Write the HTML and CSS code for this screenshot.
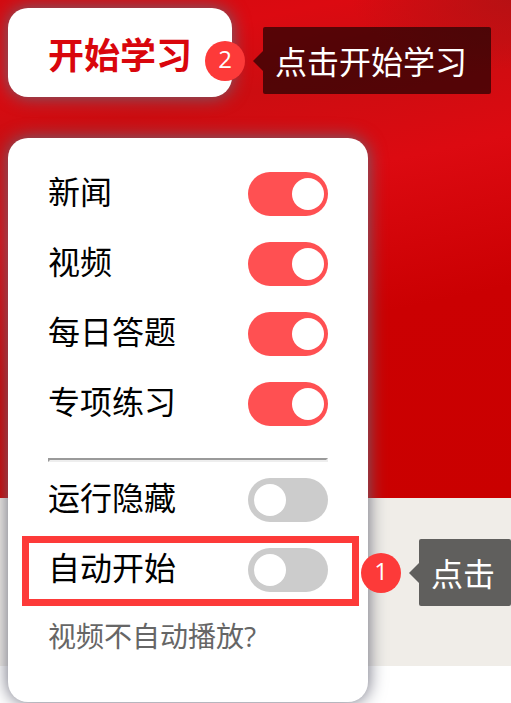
FILE: index.html
```
<!DOCTYPE html>
<html lang="zh-CN">
<head>
<meta charset="utf-8">
<meta name="viewport" content="width=device-width, initial-scale=1">
<title>开始学习</title>
<link rel="stylesheet" href="styles.css">
</head>
<body>
<main class="page">
  <div class="start">
    <button class="card start-button" type="button">开始学习</button>
    <div class="hint hint-start">
      <span class="badge">2</span>
      <span class="callout callout-wide">点击开始学习</span>
    </div>
  </div>
  <form class="card panel">
    <div class="options">
      <div class="row"><label for="news">新闻</label><input class="switch" type="checkbox" id="news" checked></div>
      <div class="row"><label for="video">视频</label><input class="switch" type="checkbox" id="video" checked></div>
      <div class="row"><label for="daily">每日答题</label><input class="switch" type="checkbox" id="daily" checked></div>
      <div class="row"><label for="special">专项练习</label><input class="switch" type="checkbox" id="special" checked></div>
    </div>
    <hr class="divider">
    <div class="options">
      <div class="row"><label for="hidden-run">运行隐藏</label><input class="switch" type="checkbox" id="hidden-run"></div>
      <div class="row row-marked">
        <label for="auto-start">自动开始</label><input class="switch" type="checkbox" id="auto-start">
        <div class="hint hint-auto">
          <span class="badge">1</span>
          <span class="callout">点击</span>
        </div>
      </div>
    </div>
    <a class="help" href="#">视频不自动播放?</a>
  </form>
</main>
</body>
</html>
```
FILE: styles.css
```
* {
  box-sizing: border-box;
}

body {
  margin: 0;
  overflow-x: hidden;
  color: #000;
  font-family: "Open Sans", "Noto Sans CJK SC", sans-serif;
  font-size: 32px;
  line-height: 44px;
  background:
    radial-gradient(ellipse 160px 70px at 100% 0, rgba(176, 18, 20, 0.8), rgba(176, 18, 20, 0)) 0 0 / 100% 498px no-repeat,
    linear-gradient(168deg, #d40a10 0%, #dc0a11 12%, #cc0d11 24%, #dc0a11 40%, #cb0002 65%, #ca0000 100%) 0 0 / 100% 498px no-repeat,
    linear-gradient(#f0ede8, #f0ede8) 0 498px / 100% 168px no-repeat,
    #fff;
}

.page {
  display: flex;
  flex-direction: column;
  align-items: flex-start;
  gap: 41px;
  padding: 8px 8px 1px;
}

.card {
  border: 0;
  border-radius: 20px;
  background: #fff;
  box-shadow: 0 0 18px #666777;
}

.start {
  position: relative;
  z-index: 1;
  display: flex;
}

.start-button {
  padding: 23px 40px 22px;
  color: #d9060c;
  font: bold 36px/44px "Noto Sans CJK SC", sans-serif;
  cursor: pointer;
}

.panel {
  width: 360px;
  padding: 34px 40px 44px;
}

.options {
  display: flex;
  flex-direction: column;
  gap: 26px;
}

.row {
  position: relative;
  display: flex;
  align-items: center;
  justify-content: space-between;
}

.row label {
  padding-bottom: 4px;
  line-height: 40px;
}

.switch {
  appearance: none;
  width: 80px;
  height: 44px;
  margin: 0;
  padding: 6px;
  border-radius: 22px;
  background: #ccc;
  cursor: pointer;
}

.switch::before {
  content: "";
  display: block;
  width: 32px;
  height: 32px;
  border-radius: 50%;
  background: #fff;
}

.switch:checked {
  background: #ff5052;
}

.switch:checked::before {
  transform: translateX(38px);
}

.divider {
  margin: 32px 0 16px;
  border: 2px solid;
  border-color: #9a9a9a #eee #eee #9a9a9a;
}

.help {
  display: block;
  margin-top: 22px;
  color: #666;
  font-size: 28px;
  line-height: 44px;
  text-decoration: none;
}

.row-marked::after {
  content: "";
  position: absolute;
  inset: -12px -31px -14px -26px;
  border: 7px solid #fd3a39;
  pointer-events: none;
}

.hint {
  position: absolute;
  display: flex;
  align-items: center;
  gap: 18px;
  color: #fff;
  white-space: nowrap;
}

.hint-start {
  top: 19px;
  left: calc(100% - 27px);
}

.hint-auto {
  top: -9px;
  left: calc(100% + 33px);
}

.badge {
  width: 40px;
  height: 40px;
  border-radius: 50%;
  background: #fd3a39;
  font-size: 24px;
  line-height: 36px;
  text-align: center;
}

.callout {
  position: relative;
  padding: 13px 16px 10px 12px;
  border-radius: 2px;
  background: rgba(0, 0, 0, 0.6);
}

.callout-wide {
  padding-right: 24px;
}

.callout::before {
  content: "";
  position: absolute;
  top: 50%;
  right: 100%;
  margin-top: -10px;
  border: 10px solid transparent;
  border-left-width: 0;
  border-right-color: rgba(0, 0, 0, 0.6);
}
```
